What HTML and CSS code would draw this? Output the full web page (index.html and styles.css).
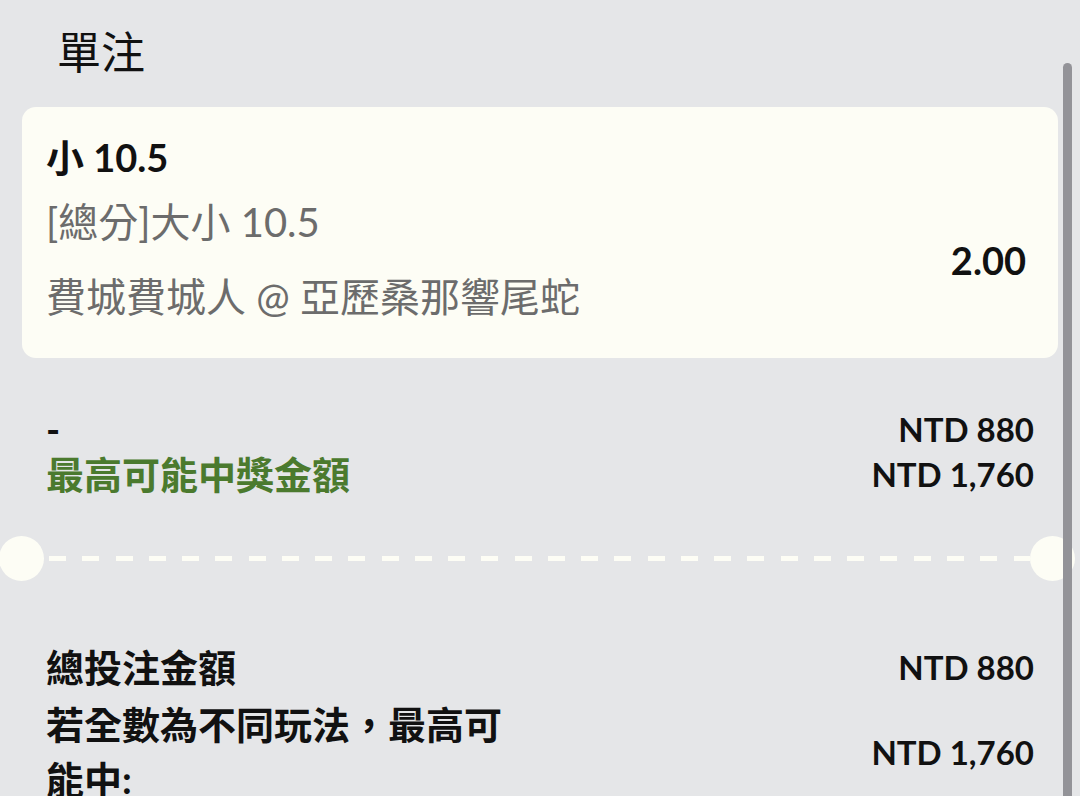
FILE: index.html
```html
<!DOCTYPE html>
<html lang="zh-Hant">
<head>
<meta charset="utf-8">
<title>單注</title>
<link rel="stylesheet" href="styles.css">
</head>
<body>
<div class="page">
  <h1 class="title">單注</h1>
  <div class="card">
    <div class="sel">小 10.5</div>
    <div class="card-row">
      <div class="card-left">
        <div class="market">[總分]大小 10.5</div>
        <div class="event">費城費城人 @ 亞歷桑那響尾蛇</div>
      </div>
      <div class="odds">2.00</div>
    </div>
  </div>
  <div class="stake">
    <div class="row">
      <span class="dash">-</span>
      <span class="amt">NTD 880</span>
    </div>
    <div class="row">
      <span class="win">最高可能中獎金額</span>
      <span class="amt">NTD 1,760</span>
    </div>
  </div>
  <div class="divider">
    <span class="notch"></span>
    <span class="dashes"></span>
    <span class="notch"></span>
  </div>
  <div class="summary">
    <div class="row">
      <span class="label">總投注金額</span>
      <span class="amt">NTD 880</span>
    </div>
    <div class="row row2">
      <span class="label wrap">若全數為不同玩法，最高可能中:</span>
      <span class="amt">NTD 1,760</span>
    </div>
  </div>
</div>
<div class="scrollbar"></div>
</body>
</html>
```
FILE: styles.css
```css
html, body {
  margin: 0;
  padding: 0;
  background: #e5e6e8;
  overflow: hidden;
}
body {
  width: 1080px;
  height: 796px;
  font-family: Lato, "Noto Sans CJK TC", sans-serif;
  color: #111;
}
.page {
  padding: 22px 0 0 0;
}
.title {
  margin: 0 0 25px 57px;
  font-size: 44px;
  line-height: 60px;
  font-weight: 400;
}
.card {
  margin: 0 22px;
  background: #fdfdf5;
  border-radius: 14px;
  padding: 25px 32px 36px 24px;
}
.sel {
  font-size: 38px;
  line-height: 50px;
  font-weight: 700;
}
.card-row {
  display: flex;
  align-items: center;
  justify-content: space-between;
  margin-top: 15px;
}
.market, .event {
  font-size: 40px;
  line-height: 50px;
  color: #6c6c6c;
}
.event {
  margin-top: 25px;
}
.odds {
  font-size: 38px;
  font-weight: 700;
  line-height: 50px;
}
.stake {
  padding: 49px 46px 0 46px;
}
.row {
  display: flex;
  justify-content: space-between;
  align-items: center;
  font-size: 38px;
  line-height: 45px;
  font-weight: 700;
}
.amt {
  font-size: 33px;
}
.win {
  color: #4b7a2e;
}
.divider {
  display: flex;
  align-items: center;
  margin-top: 39px;
  height: 45px;
}
.notch {
  width: 45px;
  height: 45px;
  border-radius: 50%;
  background: #fdfdf5;
  flex: none;
}
.notch:first-child {
  margin-left: -1px;
}
.notch:last-child {
  margin-right: -1px;
}
.dashes {
  flex: none;
  margin-left: 5px;
  width: 981px;
  height: 5px;
  background: repeating-linear-gradient(to right, #fdfdf5 0 17px, transparent 17px 33.26px);
}
.summary {
  padding: 59px 46px 0 46px;
}
.summary .row {
  line-height: 55px;
}
.row2 {
  margin-top: 2px;
}
.wrap {
  width: 480px;
}
.scrollbar {
  position: absolute;
  left: 1063px;
  top: 63px;
  width: 9px;
  height: 760px;
  border-radius: 5px 5px 0 0;
  background: #939398;
}
```
